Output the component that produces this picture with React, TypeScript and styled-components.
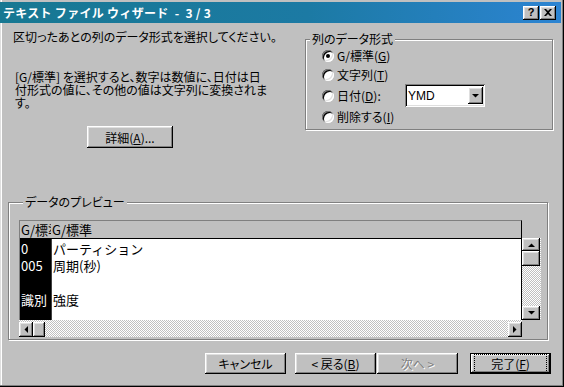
import React from 'react';
import styled, { createGlobalStyle, css } from 'styled-components';

const GlobalStyle = createGlobalStyle`
  html, body {
    margin: 0;
    padding: 0;
    background: #c0c0c0;
  }
  body {
    font-family: "Noto Sans CJK JP", "Liberation Sans", sans-serif;
    font-size: 12px;
  }
`;

// win98 style bevels
const raised = css`
  box-shadow: inset -1px -1px #000, inset 1px 1px #fff, inset -2px -2px #808080, inset 2px 2px #dfdfdf;
`;
const sunken = css`
  box-shadow: inset 1px 1px #808080, inset -1px -1px #fff, inset 2px 2px #000, inset -2px -2px #dfdfdf;
`;
const dither = css`
  background: repeating-conic-gradient(#c0c0c0 0% 25%, #ffffff 0% 50%) 0 0 / 2px 2px;
`;

const Window = styled.div`
  width: 564px;
  height: 387px;
  box-sizing: border-box;
  padding-top: 2px;
  display: flex;
  flex-direction: column;
  background: #c0c0c0;
  box-shadow: inset -1px -1px #000, inset -2px -2px #808080, inset 1px 0 #dfdfdf, inset 2px 0 #fff;
  font-family: "Noto Sans CJK JP", "Liberation Sans", sans-serif;
  font-feature-settings: "palt";
  font-size: 12px;
  color: #000;
  overflow: hidden;
`;

const TitleBar = styled.div`
  height: 21px;
  margin-right: 3px;
  padding: 0 5px 0 3px;
  display: flex;
  align-items: center;
  background: linear-gradient(90deg, #177892 0%, #1c7aa4 55%, #2c84d2 100%);
  color: #fff;
  font-weight: bold;
`;

const TitleText = styled.span`
  flex: 1;
  white-space: pre;
  font-feature-settings: normal;
  letter-spacing: 0.3px;
`;

const CaptionButton = styled.span<{ $gap?: number }>`
  width: 16px;
  height: 14px;
  margin-left: ${p => p.$gap ?? 0}px;
  display: flex;
  align-items: center;
  justify-content: center;
  background: #c0c0c0;
  ${raised};
  color: #000;
  font-family: "Liberation Sans", sans-serif;
  font-size: 11px;
  font-weight: bold;
  line-height: 1;
`;

const Body = styled.div`
  flex: 1;
  display: flex;
  flex-direction: column;
  padding-left: 8px;
`;

const TopRow = styled.div`
  display: flex;
  height: 172px;
`;

const LeftCol = styled.div`
  width: 297px;
  box-sizing: border-box;
  padding: 7px 0 0 5px;
  display: flex;
  flex-direction: column;
  align-items: flex-start;
`;

const Intro = styled.div`
  line-height: 14px;
  white-space: nowrap;
`;

const Description = styled.p`
  margin: 26px 0 0 2px;
  line-height: 13px;
  white-space: nowrap;
`;

const PushButton = styled.button<{ $w?: number; $h?: number; $isDefault?: boolean }>`
  width: ${p => p.$w ?? 81}px;
  height: ${p => p.$h ?? 21}px;
  box-sizing: border-box;
  padding: 0;
  border: ${p => (p.$isDefault ? '1px solid #000' : '0')};
  background: #c0c0c0;
  ${raised};
  font-family: inherit;
  font-feature-settings: "palt";
  font-size: 12px;
  color: #000;
  display: flex;
  align-items: center;
  justify-content: center;
  &:disabled {
    color: #808080;
    text-shadow: 1px 1px #fff;
  }
`;

const DetailButton = styled(PushButton)`
  margin: 17px 0 0 74px;
`;

const FocusRing = styled.span`
  display: flex;
  align-items: center;
  justify-content: center;
  width: 100%;
  height: 100%;
  box-sizing: border-box;
  margin: 3px;
  outline: 1px dotted #000;
  outline-offset: -1px;
`;

const Group = styled.fieldset<{ $w: number; $h: number }>`
  box-sizing: border-box;
  width: ${p => p.$w}px;
  height: ${p => p.$h}px;
  margin: 0;
  min-width: 0;
  border: 1px solid #808080;
  box-shadow: inset 1px 1px #fff, 1px 1px #fff;
`;

const FormatGroup = styled(Group)`
  margin-top: 9px;
  padding: 0 0 3px 0;
`;

const PreviewGroup = styled(Group)`
  padding: 11px 0 0 10px;
`;

const Legend = styled.legend`
  margin-left: 4px;
  padding: 0 2px;
  line-height: 14px;
  background: #c0c0c0;
`;

const OptionRow = styled.div<{ $h: number }>`
  display: grid;
  grid-template-columns: 99px 80px;
  align-items: center;
  height: ${p => p.$h}px;
`;

const RadioOption = styled.label`
  display: flex;
  align-items: center;
  gap: 3px;
  padding-left: 16px;
  white-space: nowrap;
  line-height: 14px;
`;

const RadioMark = styled.span<{ $checked?: boolean }>`
  width: 12px;
  height: 12px;
  box-sizing: border-box;
  border-radius: 50%;
  background: #fff;
  box-shadow: inset 1px 1px #808080, inset -1px -1px #fff, inset 2px 2px #000, inset -2px -2px #dfdfdf;
  display: flex;
  align-items: center;
  justify-content: center;
  &::after {
    content: '';
    width: 4px;
    height: 4px;
    border-radius: 50%;
    background: ${p => (p.$checked ? '#000' : 'transparent')};
  }
`;

const Select = styled.div`
  width: 80px;
  height: 23px;
  box-sizing: border-box;
  padding: 2px;
  display: flex;
  align-items: center;
  background: #fff;
  ${sunken};
`;

const SelectText = styled.span`
  flex: 1;
  padding-left: 1px;
  font-family: "Liberation Sans", sans-serif;
  font-size: 12px;
`;

const ArrowButton = styled.span<{ $w: number; $h: number }>`
  width: ${p => p.$w}px;
  height: ${p => p.$h}px;
  flex-shrink: 0;
  box-sizing: border-box;
  display: flex;
  align-items: center;
  justify-content: center;
  background: #c0c0c0;
  ${raised};
`;

const PreviewGrid = styled.div`
  display: grid;
  grid-template-columns: 503px 19px;
  grid-template-rows: 18px 82px 17px;
  font-feature-settings: normal;
  font-size: 13px;
`;

const Sheet = styled.div`
  grid-column: 1;
  grid-row: 1 / 3;
  display: flex;
  flex-direction: column;
  box-sizing: border-box;
  border-top: 1px solid #808080;
  border-left: 1px solid #808080;
  border-right: 1px solid #000;
  box-shadow: inset 1px 1px #000;
  overflow: hidden;
`;

const HeaderRow = styled.div`
  height: 17px;
  flex-shrink: 0;
  display: flex;
  border-bottom: 1px solid #000;
  background: #c0c0c0;
`;

const Cell = styled.div<{ $w?: number }>`
  ${p => (p.$w ? `width: ${p.$w}px; flex-shrink: 0;` : 'flex: 1;')}
  overflow: hidden;
  white-space: nowrap;
  line-height: 17px;
  padding-left: 1px;
  box-sizing: border-box;
`;

const SheetBody = styled.div`
  flex: 1;
  display: flex;
  background: #fff;
`;

const Column = styled.div<{ $w?: number; $dark?: boolean }>`
  ${p => (p.$w ? `width: ${p.$w}px; flex-shrink: 0;` : 'flex: 1;')}
  padding-top: 1px;
  background: ${p => (p.$dark ? '#000' : '#fff')};
  color: ${p => (p.$dark ? '#fff' : '#000')};
  border-right: ${p => (p.$dark ? '1px solid #404040' : '0')};
`;

const Line = styled.div`
  height: 17px;
  line-height: 17px;
  padding-left: 1px;
  white-space: nowrap;
  overflow: hidden;
`;

const VScroll = styled.div`
  grid-column: 2;
  grid-row: 2;
  display: flex;
  flex-direction: column;
  ${dither};
`;

const HScroll = styled.div`
  grid-column: 1;
  grid-row: 3;
  display: flex;
  padding-top: 2px;
  ${dither};
`;

const Thumb = styled.span<{ $w: number; $h: number }>`
  width: ${p => p.$w}px;
  height: ${p => p.$h}px;
  flex-shrink: 0;
  background: #c0c0c0;
  ${raised};
`;

const Spacer = styled.span`
  flex: 1;
`;

const ButtonRow = styled.div`
  display: flex;
  justify-content: flex-end;
  margin-top: 13px;
  padding-right: 13px;
`;

const NavPair = styled.div`
  display: flex;
  gap: 1px;
  margin: 0 12px 0 9px;
`;

const Arrow = ({ dir }: { dir: 'up' | 'down' | 'left' | 'right' }) => {
  const pts = {
    up: '0,4 7,4 3.5,0.5',
    down: '0,0 7,0 3.5,3.5',
    left: '4,0 4,7 0.5,3.5',
    right: '0,0 0,7 3.5,3.5',
  }[dir];
  const vertical = dir === 'up' || dir === 'down';
  return (
    <svg width={vertical ? 7 : 4} height={vertical ? 4 : 7} viewBox={vertical ? '0 0 7 4' : '0 0 4 7'}>
      <polygon points={pts} fill="#000" />
    </svg>
  );
};

const CloseGlyph = () => (
  <svg width="8" height="7" viewBox="0 0 8 7">
    <path d="M0 0h2l2 2 2-2h2L5 3.5 8 7H6L4 5 2 7H0l3-3.5z" fill="#000" />
  </svg>
);

const formats = [
  { label: 'G/標準(', key: 'G', tail: ')', checked: true, h: 19 },
  { label: '文字列(', key: 'T', tail: ')', h: 19 },
  { label: '日付(', key: 'D', tail: '):', h: 23, select: true },
  { label: '削除する(', key: 'I', tail: ')', h: 19 },
];

const rows = [
  { id: '0', text: 'パーティション' },
  { id: '005', text: '周期(秒)' },
  { id: '', text: '' },
  { id: '識別', text: '強度' },
];

export default function App() {
  return (
    <>
      <GlobalStyle />
      <Window>
        <TitleBar>
          <TitleText>テキスト ファイル ウィザード  -  3 / 3</TitleText>
          <CaptionButton>?</CaptionButton>
          <CaptionButton $gap={1}>
            <CloseGlyph />
          </CaptionButton>
        </TitleBar>

        <Body>
          <TopRow>
            <LeftCol>
              <Intro>区切ったあとの列のデータ形式を選択してください。</Intro>
              <Description>
                [G/標準] を選択すると、数字は数値に、日付は日
                <br />
                付形式の値に、その他の値は文字列に変換されま
                <br />
                す。
              </Description>
              <DetailButton $w={86} $h={22}>
                詳細(<u>A</u>)...
              </DetailButton>
            </LeftCol>

            <FormatGroup $w={248} $h={98}>
              <Legend>列のデータ形式</Legend>
              {formats.map(f => (
                <OptionRow key={f.key} $h={f.h}>
                  <RadioOption>
                    <RadioMark $checked={f.checked} />
                    <span>
                      {f.label}
                      <u>{f.key}</u>
                      {f.tail}
                    </span>
                  </RadioOption>
                  {f.select && (
                    <Select>
                      <SelectText>YMD</SelectText>
                      <ArrowButton $w={15} $h={17}>
                        <Arrow dir="down" />
                      </ArrowButton>
                    </Select>
                  )}
                </OptionRow>
              ))}
            </FormatGroup>
          </TopRow>

          <PreviewGroup $w={540} $h={145}>
            <Legend>データのプレビュー</Legend>
            <PreviewGrid>
              <Sheet>
                <HeaderRow>
                  <Cell $w={31}>G/標準</Cell>
                  <Cell>G/標準</Cell>
                </HeaderRow>
                <SheetBody>
                  <Column $w={31} $dark>
                    {rows.map((r, i) => (
                      <Line key={i}>{r.id}</Line>
                    ))}
                  </Column>
                  <Column>
                    {rows.map((r, i) => (
                      <Line key={i}>{r.text}</Line>
                    ))}
                  </Column>
                </SheetBody>
              </Sheet>
              <VScroll>
                <ArrowButton $w={18} $h={13}>
                  <Arrow dir="up" />
                </ArrowButton>
                <Thumb $w={18} $h={15} />
                <Spacer />
                <ArrowButton $w={18} $h={14}>
                  <Arrow dir="down" />
                </ArrowButton>
              </VScroll>
              <HScroll>
                <ArrowButton $w={14} $h={15}>
                  <Arrow dir="left" />
                </ArrowButton>
                <Thumb $w={12} $h={15} />
                <Spacer />
                <ArrowButton $w={14} $h={15}>
                  <Arrow dir="right" />
                </ArrowButton>
              </HScroll>
            </PreviewGrid>
          </PreviewGroup>

          <ButtonRow>
            <PushButton>キャンセル</PushButton>
            <NavPair>
              <PushButton>
                &lt; 戻る(<u>B</u>)
              </PushButton>
              <PushButton disabled>次へ &gt;</PushButton>
            </NavPair>
            <PushButton $isDefault>
              <FocusRing>
                完了(<u>F</u>)
              </FocusRing>
            </PushButton>
          </ButtonRow>
        </Body>
      </Window>
    </>
  );
}
